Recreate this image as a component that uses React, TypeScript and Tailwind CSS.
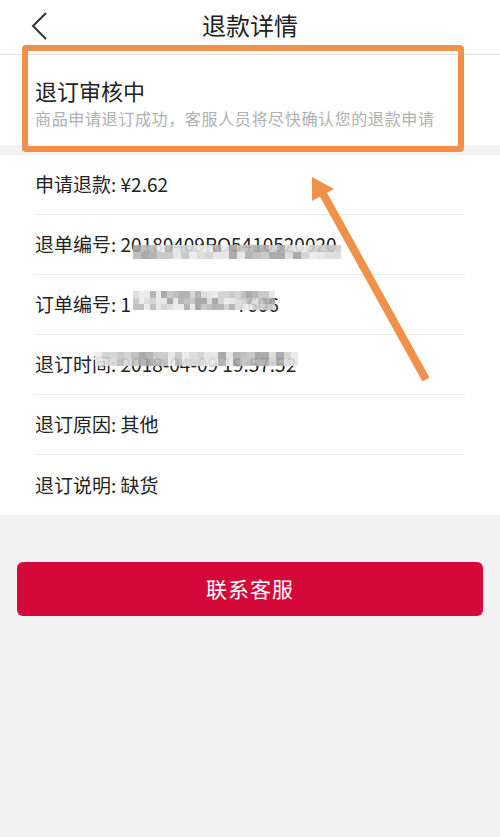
import React from "react";

const font = { fontFamily: '"Noto Sans CJK SC", "Noto Sans", sans-serif' };

// mosaic shades used for the blurred-out parts of the screenshot
const shades = [
  "bg-[#c4c4c4]",
  "bg-[#dadada]",
  "bg-[#adadad]",
  "bg-[#e4e4e4]",
  "bg-[#bababa]",
  "bg-[#d0d0d0]",
  "bg-[#a2a2a2]",
  "bg-[#eaeaea]",
];

function Mosaic({ cols, rows, className, seed = 1 }: { cols: number; rows: number; className: string; seed?: number }) {
  const cells: string[] = [];
  for (let i = 0; i < cols * rows; i++) {
    cells.push(shades[(i * 5 + seed * 3 + ((i * i) % 7)) % shades.length]);
  }
  return (
    <div
      className={`absolute grid ${className}`}
      style={{ gridTemplateColumns: `repeat(${cols}, 1fr)`, gridTemplateRows: `repeat(${rows}, 1fr)` }}
    >
      {cells.map((c, i) => (
        <div key={i} className={`${c} opacity-90`} />
      ))}
    </div>
  );
}

function Row({ children, last }: { children: React.ReactNode; last?: boolean }) {
  return (
    <div className={`relative h-[60px] flex items-center ${last ? "" : "border-b border-[#ececec]"}`}>
      {children}
    </div>
  );
}

export default function App() {
  return (
    <div className="relative w-[500px] h-[837px] bg-[#f2f2f2] overflow-hidden text-[#222]" style={font}>
      {/* Header */}
      <div className="relative h-[55px] bg-white border-b border-[#dcdcdc] flex items-center justify-center">
        <svg className="absolute left-[30px] top-[11px]" width="20" height="30" viewBox="0 0 20 30">
          <polyline points="16,2 3,15 16,28" fill="none" stroke="#333" strokeWidth="2" />
        </svg>
        <h1 className="text-[24px] leading-none text-[#222] -mt-[4px]">退款详情</h1>
      </div>

      {/* Status */}
      <div className="bg-white h-[90px] px-[35px] pt-[22px]">
        <div className="text-[22px] leading-[26px] text-[#222]">退订审核中</div>
        <div className="mt-[4px] text-[16px] leading-[22px] text-[#b0b0b0] tracking-[0.65px] whitespace-nowrap">
          商品申请退订成功，客服人员将尽快确认您的退款申请
        </div>
      </div>

      {/* Detail list */}
      <div className="mt-[10px] bg-white px-[35px] text-[19px]">
        <Row>申请退款: ¥2.62</Row>
        <Row>
          <span className="relative">
            退单编号: 20180409RO5410520020
            <Mosaic cols={26} rows={2} seed={2} className="left-[98px] right-[-4px] top-[15px] h-[14px]" />
          </span>
        </Row>
        <Row>
          <span className="relative">
            订单编号: 1<span className="text-transparent">0000000000</span>7606
            <Mosaic cols={25} rows={3} seed={3} className="left-[98px] right-[4px] top-[1px] h-[19px]" />
          </span>
        </Row>
        <Row>
          <span className="relative">
            退订时间: 2018-04-09 19:57:52
            <Mosaic cols={28} rows={2} seed={5} className="left-[60px] right-[-2px] top-[2px] h-[14px]" />
          </span>
        </Row>
        <Row>退订原因: 其他</Row>
        <Row last>退订说明: 缺货</Row>
      </div>

      {/* Contact button */}
      <div className="px-[17px] pt-[47px]">
        <button className="w-full h-[54px] rounded-[6px] bg-[#d5083a] text-white text-[21px] tracking-[1px]">
          联系客服
        </button>
      </div>

      {/* Annotation: orange box */}
      <div className="absolute left-[22px] top-[45px] w-[442px] h-[107px] border-[6px] border-[#f0914a] rounded-[4px]" />

      {/* Annotation: arrow */}
      <svg className="absolute left-0 top-0 pointer-events-none" width="500" height="837" viewBox="0 0 500 837">
        <line x1="424" y1="376" x2="322" y2="192" stroke="#f0914a" strokeWidth="8" strokeLinecap="square" />
        <polygon points="312,177 334,189 312,201" fill="#f0914a" />
      </svg>
    </div>
  );
}
